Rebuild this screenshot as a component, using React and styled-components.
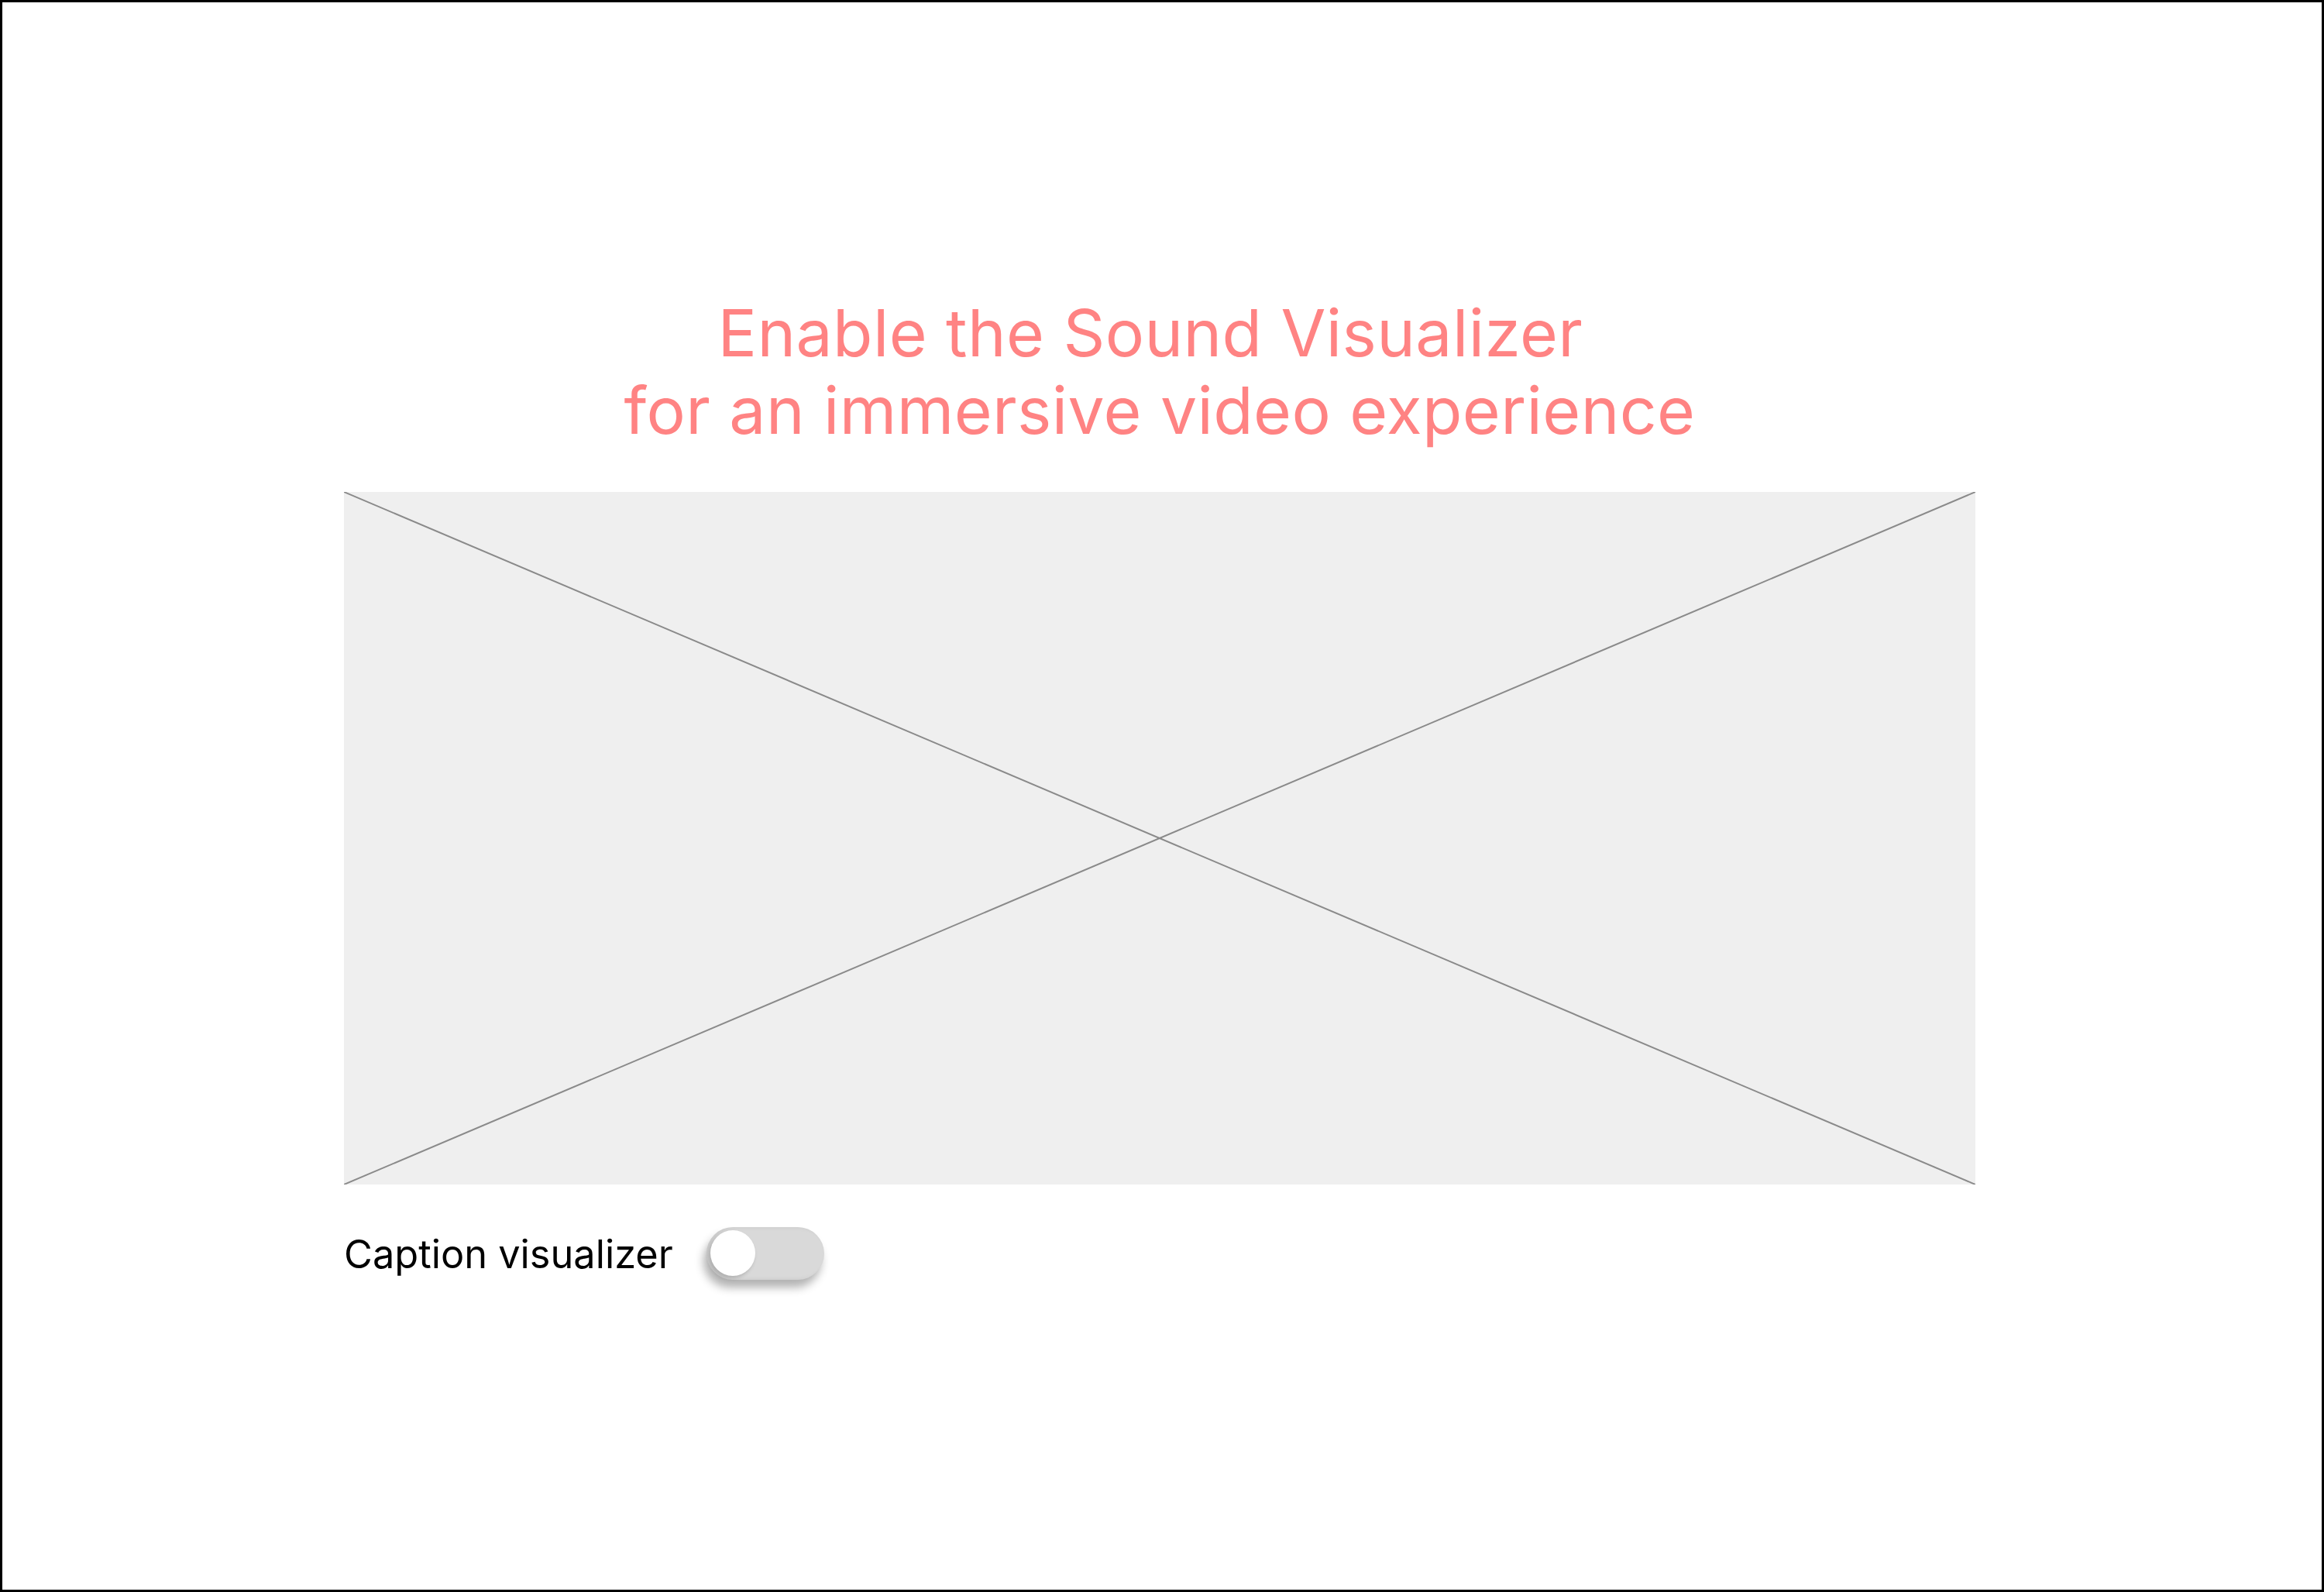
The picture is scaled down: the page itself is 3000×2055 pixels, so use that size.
import React, { useState } from 'react';
import styled, { createGlobalStyle } from 'styled-components';

const GlobalStyle = createGlobalStyle`
  html, body {
    margin: 0;
    padding: 0;
    background: #ffffff;
  }
  * {
    box-sizing: border-box;
  }
`;

const Page = styled.div`
  width: 3000px;
  height: 2055px;
  border: 3px solid #000000;
  background: #ffffff;
  display: flex;
  flex-direction: column;
  align-items: center;
  padding: 377px 6px 0 0;
  font-family: Inter, 'Noto Sans', sans-serif;
`;

const Content = styled.div`
  width: 2106px;
  display: flex;
  flex-direction: column;
`;

const Title = styled.h1`
  margin: 0 0 55px;
  font-size: 84px;
  font-weight: 400;
  line-height: 100px;
  text-align: center;
  color: #ff8383;
  letter-spacing: 0.4px;
`;

const Placeholder = styled.div`
  width: 100%;
  height: 894px;
  background: #efefef;

  svg {
    display: block;
    width: 100%;
    height: 100%;
  }
`;

const CaptionRow = styled.div`
  display: flex;
  align-items: center;
  gap: 43px;
  margin-top: 55px;
`;

const Label = styled.span`
  font-size: 50.5px;
  color: #000000;
`;

const Track = styled.button`
  position: relative;
  width: 152px;
  height: 68px;
  padding: 0;
  border: none;
  border-radius: 34px;
  background: ${({ $on }) => ($on ? '#ff8383' : '#d9d9d9')};
  box-shadow: -4px 10px 12px rgba(0, 0, 0, 0.3), inset 4px 0 6px rgba(0, 0, 0, 0.08);
  cursor: pointer;
`;

const Knob = styled.span`
  position: absolute;
  top: 4px;
  left: ${({ $on }) => ($on ? '89px' : '5px')};
  width: 58px;
  height: 59px;
  border-radius: 50%;
  background: #ffffff;
  box-shadow: -2px 3px 5px rgba(0, 0, 0, 0.18);
`;

const App = () => {
  const [on, setOn] = useState(false);

  return (
    <>
      <GlobalStyle />
      <Page>
        <Content>
          <Title>
            Enable the Sound Visualizer{'\u00a0'}
            <br />
            for an immersive video experience
          </Title>
          <Placeholder>
            <svg viewBox="0 0 2106 894" preserveAspectRatio="none">
              <line x1="0" y1="0" x2="2106" y2="894" stroke="#8a8a8a" strokeWidth="2" />
              <line x1="0" y1="894" x2="2106" y2="0" stroke="#8a8a8a" strokeWidth="2" />
            </svg>
          </Placeholder>
          <CaptionRow>
            <Label>Caption visualizer</Label>
            <Track $on={on} onClick={() => setOn(!on)} aria-label="Caption visualizer">
              <Knob $on={on} />
            </Track>
          </CaptionRow>
        </Content>
      </Page>
    </>
  );
};

export default App;
